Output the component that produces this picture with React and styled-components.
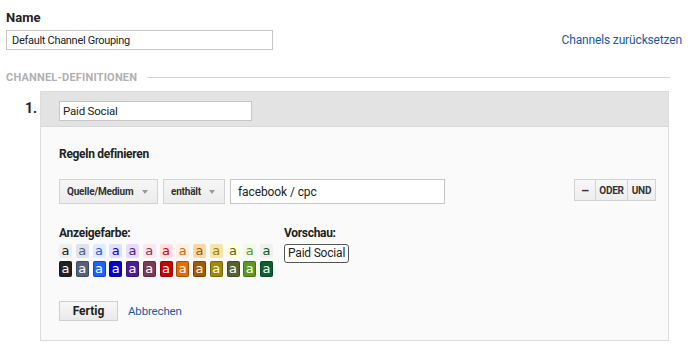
import React from "react";
import styled, { createGlobalStyle } from "styled-components";

const GlobalStyle = createGlobalStyle`
  body {
    margin: 0;
    background: #fff;
    font-family: Roboto, "Liberation Sans", Arial, sans-serif;
    color: #222;
  }
`;

const Page = styled.div`
  display: flex;
  flex-direction: column;
  padding: 10px 18px 0 6px;
  width: 700px;
  box-sizing: border-box;
`;

const TopRow = styled.div`
  display: flex;
  justify-content: space-between;
  align-items: flex-end;
`;

const Field = styled.div`
  display: flex;
  flex-direction: column;
  gap: 5px;
`;

const Label = styled.div`
  font-size: ${(p) => p.$size || 12}px;
  font-weight: bold;
  line-height: 15px;
  letter-spacing: ${(p) => (p.$size ? "0" : "-0.3px")};
`;

const TextInput = styled.input`
  box-sizing: border-box;
  width: ${(p) => p.$width}px;
  height: ${(p) => p.$height || 20}px;
  border: 1px solid #c6c6c6;
  background: #fff;
  font-family: Roboto, "Liberation Sans", Arial, sans-serif;
  font-size: ${(p) => p.$size || 11}px;
  letter-spacing: ${(p) => p.$ls ?? -0.3}px;
  color: #222;
  padding: 0 ${(p) => p.$pad || 5}px;
  outline: none;
  margin: 0;
`;

const Link = styled.a`
  color: #1b58a4;
  font-size: ${(p) => p.$size || 11.5}px;
  letter-spacing: -0.15px;
  text-decoration: none;
  cursor: pointer;
`;

const ResetLink = styled(Link)`
  margin-bottom: 3px;
`;

const SectionHeader = styled.div`
  display: flex;
  align-items: center;
  gap: 10px;
  margin-top: 21px;
  margin-right: 12px;
  font-size: 11px;
  font-weight: bold;
  color: #b0b0b0;
  letter-spacing: 0.2px;
`;

const Line = styled.div`
  flex: 1;
  height: 1px;
  background: #d4d4d4;
`;

const RuleRow = styled.div`
  display: flex;
  margin-top: 7px;
`;

const Number = styled.div`
  width: 34px;
  box-sizing: border-box;
  padding: 9px 3px 0 0;
  text-align: right;
  font-size: 14px;
  font-weight: bold;
  color: #222;
`;

const Panel = styled.div`
  width: 629px;
  border: 1px solid #dcdcdc;
  box-sizing: border-box;
  display: flex;
  flex-direction: column;
`;

const PanelHead = styled.div`
  background: #e3e3e3;
  height: 35px;
  box-sizing: border-box;
  padding: 8px 18px;
  border-bottom: 1px solid #d8d8d8;
`;

const PanelBody = styled.div`
  background: #fafafa;
  padding: 20px 12px 19px 18px;
  display: flex;
  flex-direction: column;
`;

const RuleLine = styled.div`
  display: flex;
  align-items: flex-start;
  margin-top: 17px;
  gap: 5px;
`;

const Select = styled.div`
  box-sizing: border-box;
  height: 25px;
  width: ${(p) => p.$width}px;
  border: 1px solid #d3d3d3;
  background: linear-gradient(#f6f6f6, #ececec);
  display: flex;
  align-items: center;
  justify-content: space-between;
  padding: 0 9px 0 7px;
  font-size: 10px;
  letter-spacing: -0.2px;
  font-weight: bold;
  color: #333;
`;

const Caret = styled.span`
  width: 0;
  height: 0;
  border-left: 3.5px solid transparent;
  border-right: 3.5px solid transparent;
  border-top: 4px solid #999;
`;

const Spacer = styled.div`
  flex: 1;
`;

const ButtonGroup = styled.div`
  display: flex;
  border: 1px solid #d3d3d3;
  background: linear-gradient(#f8f8f8, #eeeeee);
`;

const GroupButton = styled.div`
  height: 20px;
  width: ${(p) => p.$width}px;
  display: flex;
  align-items: center;
  justify-content: center;
  font-size: ${(p) => (p.$minus ? 13 : 10)}px;
  letter-spacing: -0.2px;
  font-weight: bold;
  color: #333;
  & + & {
    border-left: 1px solid #d3d3d3;
  }
`;

const ColorArea = styled.div`
  display: flex;
  gap: 11px;
  margin-top: 22px;
`;

const ColorCol = styled.div`
  display: flex;
  flex-direction: column;
  gap: 3px;
`;

const SwatchGrid = styled.div`
  display: grid;
  grid-template-columns: repeat(13, 13px);
  column-gap: 3.75px;
  row-gap: 3px;
`;

const Swatch = styled.div`
  width: 13px;
  height: ${(p) => (p.$dark ? 16 : 14)}px;
  border-radius: 2px;
  background: ${(p) => p.$bg};
  color: ${(p) => p.$fg};
  font-size: 13px;
  line-height: ${(p) => (p.$dark ? 16 : 14)}px;
  text-align: center;
  font-family: "DejaVu Sans", Roboto, sans-serif;
  box-shadow: ${(p) => (p.$dark ? "inset 0 0 0 1px rgba(0,0,0,0.25)" : "none")};
`;

const Preview = styled.div`
  align-self: flex-start;
  border: 1px solid #555;
  border-radius: 3px;
  padding: 1px 3px;
  font-size: 12px;
  letter-spacing: -0.2px;
  line-height: 15px;
  color: #222;
  background: #fff;
`;

const Actions = styled.div`
  display: flex;
  align-items: center;
  gap: 10px;
  margin-top: 24px;
`;

const Button = styled.button`
  box-sizing: border-box;
  height: 20px;
  width: 59px;
  border: 1px solid #cfcfcf;
  background: linear-gradient(#f8f8f8, #e9e9e9);
  font-family: Roboto, "Liberation Sans", Arial, sans-serif;
  font-size: 12px;
  font-weight: bold;
  color: #222;
  padding: 0;
`;

const colors = [
  ["#eeeeee", "#222222", "#222222"],
  ["#dfe4ec", "#4f5d79", "#55627e"],
  ["#e1ecff", "#1c5cf6", "#1d60ff"],
  ["#e1e1ff", "#0b00c8", "#0600cc"],
  ["#e7dcfa", "#4b1d96", "#4c1c98"],
  ["#fde6ef", "#7b3b52", "#7d3a52"],
  ["#ffe0e0", "#cc0000", "#cc0000"],
  ["#fff0e2", "#e36200", "#e86a00"],
  ["#fbd8a9", "#9c5800", "#a45a00"],
  ["#f6e5a9", "#9b8200", "#a38a00"],
  ["#ffffd9", "#5b6120", "#5a602e"],
  ["#f3f8e9", "#5a9a20", "#5b9a22"],
  ["#eef2ee", "#0b5a2a", "#0b6030"],
];

function App() {
  return (
    <Page>
      <GlobalStyle />
      <TopRow>
        <Field>
          <Label $size={13}>Name</Label>
          <TextInput $width={267} defaultValue="Default Channel Grouping" />
        </Field>
        <ResetLink $size={12}>Channels zurücksetzen</ResetLink>
      </TopRow>

      <SectionHeader>
        CHANNEL-DEFINITIONEN
        <Line />
      </SectionHeader>

      <RuleRow>
        <Number>1.</Number>
        <Panel>
          <PanelHead>
            <TextInput $width={193} $pad={3} $size={11.5} $ls={-0.2} defaultValue="Paid Social" />
          </PanelHead>
          <PanelBody>
            <Label>Regeln definieren</Label>
            <RuleLine>
              <Select $width={99}>
                Quelle/Medium <Caret />
              </Select>
              <Select $width={62}>
                enthält <Caret />
              </Select>
              <TextInput $width={215} $height={25} $size={12} $ls={-0.1} $pad={7} defaultValue="facebook / cpc" />
              <Spacer />
              <ButtonGroup>
                <GroupButton $width={20} $minus>–</GroupButton>
                <GroupButton $width={31}>ODER</GroupButton>
                <GroupButton $width={27}>UND</GroupButton>
              </ButtonGroup>
            </RuleLine>

            <ColorArea>
              <ColorCol>
                <Label>Anzeigefarbe:</Label>
                <SwatchGrid>
                  {colors.map(([bg, fg], i) => (
                    <Swatch key={"l" + i} $bg={bg} $fg={fg}>a</Swatch>
                  ))}
                  {colors.map(([, , dark], i) => (
                    <Swatch key={"d" + i} $bg={dark} $fg="#fff" $dark>a</Swatch>
                  ))}
                </SwatchGrid>
              </ColorCol>
              <ColorCol>
                <Label>Vorschau:</Label>
                <Preview>Paid Social</Preview>
              </ColorCol>
            </ColorArea>

            <Actions>
              <Button>Fertig</Button>
              <Link>Abbrechen</Link>
            </Actions>
          </PanelBody>
        </Panel>
      </RuleRow>
    </Page>
  );
}

export default App;
